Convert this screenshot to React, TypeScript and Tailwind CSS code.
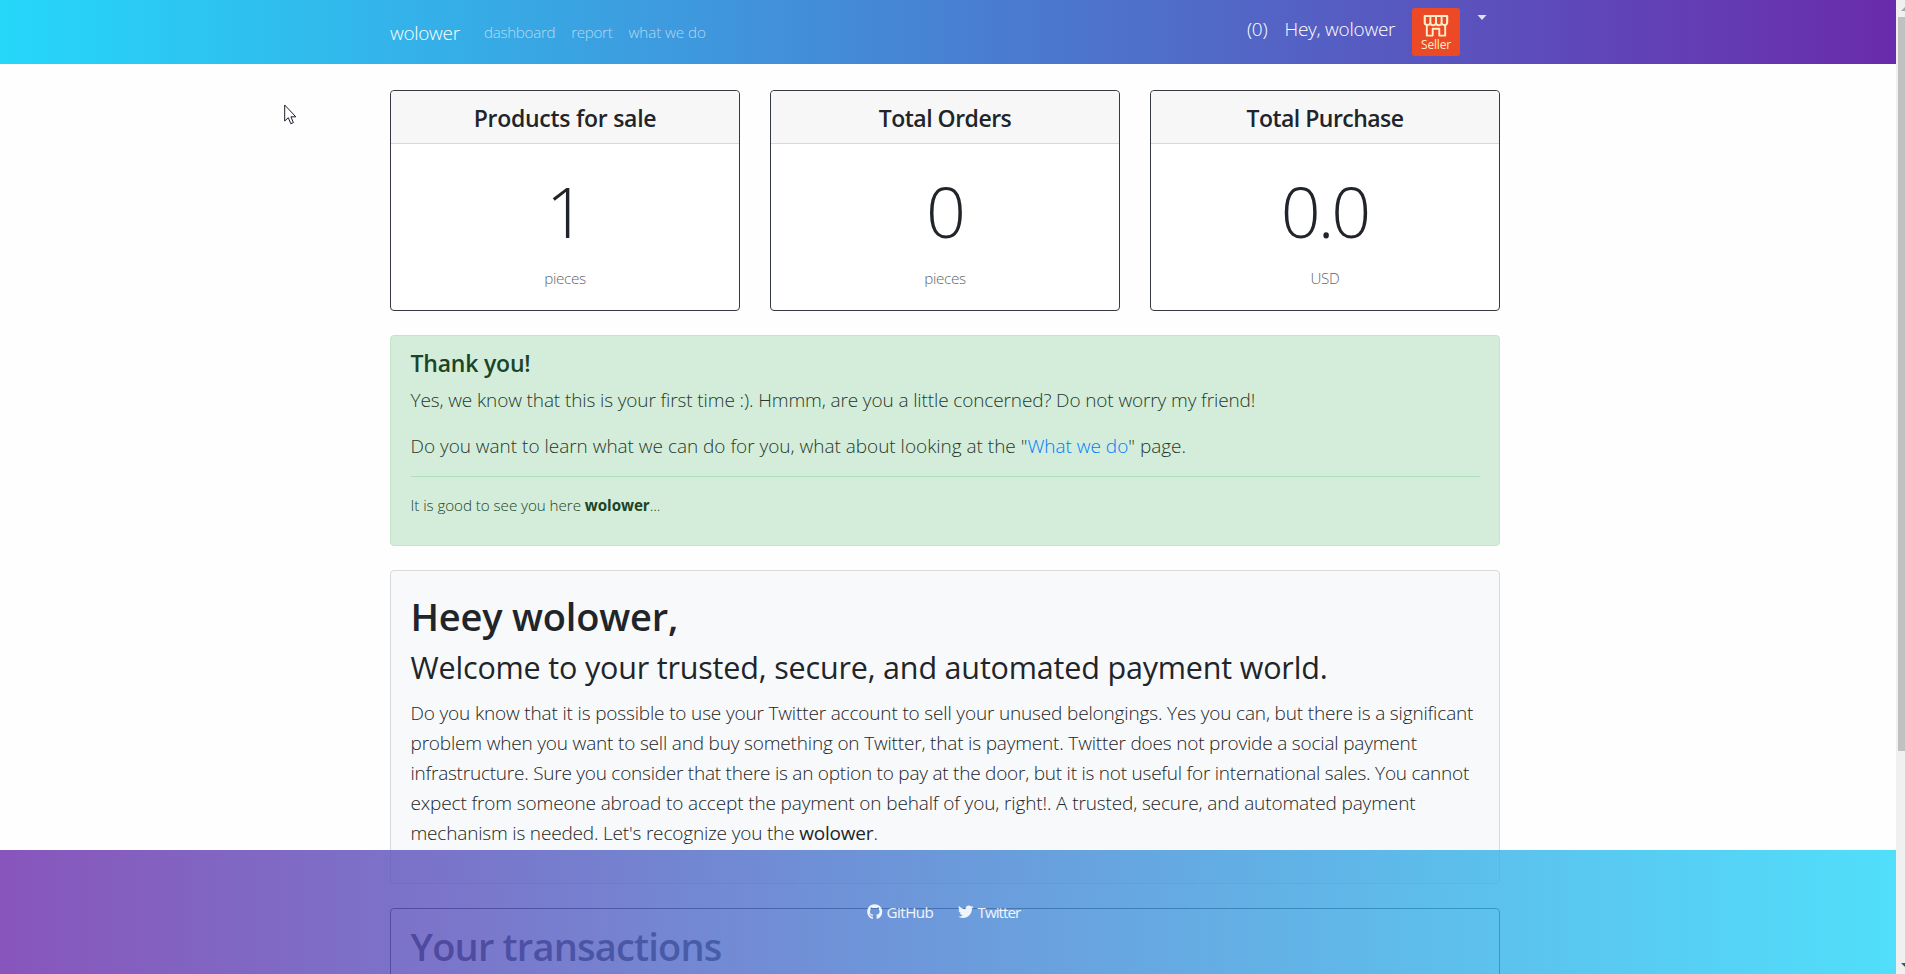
import { FaGithub, FaTwitter } from "react-icons/fa";

const stats = [
  { title: "Products for sale", value: "1", unit: "pieces", tracking: "tracking-[-0.27px]" },
  { title: "Total Orders", value: "0", unit: "pieces", tracking: "tracking-[-0.5px]" },
  { title: "Total Purchase", value: "0.0", unit: "USD", tracking: "tracking-[-0.52px]" },
];

const story = [
  { text: "Do you know that it is possible to use your Twitter account to sell your unused belongings. Yes you can, but there is a significant", tracking: "tracking-[-0.16px]" },
  { text: "problem when you want to sell and buy something on Twitter, that is payment. Twitter does not provide a social payment", tracking: "tracking-[-0.18px]" },
  { text: "infrastructure. Sure you consider that there is an option to pay at the door, but it is not useful for international sales. You cannot", tracking: "tracking-[-0.235px]" },
  { text: "expect from someone abroad to accept the payment on behalf of you, right!. A trusted, secure, and automated payment", tracking: "tracking-[-0.135px]" },
];

function SellerBadge() {
  return (
    <div className="flex h-12 w-12 flex-col items-center rounded-[3px] bg-[#ec4a26] pt-[6px] text-[#fdeecb]">
      <svg width="26" height="24" viewBox="0 0 26 24" fill="none" stroke="currentColor" strokeWidth="1.9" strokeLinejoin="round">
        <path d="M3 2h20v6.2a2.5 2.5 0 0 1-5 .6 2.5 2.5 0 0 1-5 0 2.5 2.5 0 0 1-5 0 2.5 2.5 0 0 1-5-.6z" transform="translate(-1.6 0) scale(1.12 1)" />
        <path d="M7.4 2v6.5M13 2v6.5M18.6 2v6.5M3.8 11v10.6h5.9v-6.8h6.6v6.8h5.9V11" />
      </svg>
      <span className="-mt-px text-[12px] font-medium leading-[15px] tracking-[-0.2px]">Seller</span>
    </div>
  );
}

function Navbar() {
  return (
    <header className="flex h-16 bg-linear-to-r/srgb from-[#25d7fa] to-[#6a2bab] pl-[390px] font-light text-white">
      <span className="w-[94px] pt-[18px] text-[19px] leading-[30px] tracking-[-0.3px]">wolower</span>
      <nav className="flex gap-4 pt-5 text-[15.2px] leading-6 tracking-[-0.32px] text-white/60">
        <a>dashboard</a>
        <a>report</a>
        <a className="tracking-[-0.1px]">what we do</a>
      </nav>
      <div className="ml-auto flex w-[649px] text-[19px] leading-[30px]">
        <span className="w-[37.5px] pt-[14px] tracking-[-0.3px]">(0)</span>
        <span className="w-[127.5px] pt-[14px] tracking-[-0.25px]">Hey, wolower</span>
        <div className="pt-2">
          <SellerBadge />
        </div>
        <svg className="mt-[15px] ml-[17px]" width="10" height="5" viewBox="0 0 10 5">
          <path d="M0.5 0h9L5 5z" fill="#e3dff2" />
        </svg>
      </div>
    </header>
  );
}

function Footer() {
  return (
    <footer className="absolute bottom-0 left-0 flex h-[124px] w-[1896px] items-start bg-linear-to-r/srgb from-[#6a2bab]/80 to-[#25d7fa]/80 pt-[50px] pl-[867px] text-[15.2px] leading-6 text-white/90">
      <a className="flex w-[91px] items-center">
        <FaGithub className="mr-1 size-[15.5px]" />
        <span className="tracking-[-0.55px]">GitHub</span>
      </a>
      <a className="flex items-center">
        <FaTwitter className="mr-1 size-[15.5px]" />
        <span className="tracking-[-0.95px]">Twitter</span>
      </a>
    </footer>
  );
}

function Scrollbar() {
  return (
    <div className="flex w-[9px] shrink-0 flex-col bg-[#f0f0f0] pl-[2px]">
      <svg className="mt-[6px] ml-[3px]" width="4" height="5" viewBox="0 0 4 5">
        <path d="M0 5L4 1v4z" fill="#a3a9b0" />
      </svg>
      <div className="mt-[6px] h-[734px] bg-[#c1c1c1]" />
      <svg className="mt-auto mb-[7px] ml-[3px]" width="4" height="4" viewBox="0 0 4 4">
        <path d="M0 0h4v4z" fill="#505050" />
      </svg>
    </div>
  );
}

export default function App() {
  return (
    <div className="relative flex h-[974px] w-[1905px] overflow-hidden bg-[#fefefe] font-['Open_Sans',sans-serif] text-[#212529]">
      <div className="h-[974px] w-[1896px] overflow-hidden">
        <Navbar />
        <main className="ml-[390px] w-[1110px] whitespace-nowrap pt-[26px]">
          <div className="grid grid-cols-3 gap-[30px]">
            {stats.map((s) => (
              <section key={s.title} className="h-[221px] rounded border border-[#343a40] bg-white text-center">
                <h4 className={`h-[53px] rounded-t border-b border-[#d8d8d8] bg-[#f7f7f7] pt-[13px] text-[23px] font-semibold leading-[29px] ${s.tracking}`}>
                  {s.title}
                </h4>
                <p className="mt-[24px] text-[70px] font-light leading-[86px] tracking-[-3px] indent-[-1px]">{s.value}</p>
                <p className="mt-[12px] text-[15.2px] font-light leading-6 tracking-[-0.3px] text-[#5d666e]">{s.unit}</p>
              </section>
            ))}
          </div>

          <section className="mt-6 h-[211px] rounded border border-[#c3e6cb] bg-[#d4edda] px-[19.5px] pt-[13px] text-[#155724]">
            <h4 className="text-[23px] font-semibold leading-[29px] tracking-[-0.2px] text-[#1c4427]">Thank you!</h4>
            <p className="mt-[7px] text-[19px] font-light leading-[30px] tracking-[-0.12px] text-[#26382b]">
              Yes, we know that this is your first time :). Hmmm, are you a little concerned? Do not worry my friend!
            </p>
            <p className="mt-4 text-[19px] font-light leading-[30px] tracking-[-0.02px] text-[#26382b]">
              Do you want to learn what we can do for you, what about looking at the "<a className="text-[#007bff]">What we do</a>" page.
            </p>
            <hr className="mt-[15px] border-[#b1dfbb]" />
            <p className="mt-4 text-[15.2px] font-light leading-6 tracking-[-0.06px] text-[#1c4427]">
              It is good to see you here <b className="font-bold">wolower</b>...
            </p>
          </section>

          <section className="mt-6 h-[314px] rounded border border-[#d8d9da] bg-[#f8f9fa] px-[19.5px] pt-[21px]">
            <h2 className="text-[38px] font-semibold leading-[48px] tracking-[-0.2px]">Heey wolower,</h2>
            <h3 className="mt-2 text-[30.5px] leading-[38px] tracking-[-0.18px]">
              Welcome to your trusted, secure, and automated payment world.
            </h3>
            <p className="mt-3 text-[19px] font-light leading-[30px]">
              {story.map((line) => (
                <span key={line.text} className={`block ${line.tracking}`}>{line.text}</span>
              ))}
              <span className="block tracking-[-0.18px]">
                mechanism is needed. Let's recognize you the <span className="font-normal">wolower</span>.
              </span>
            </p>
          </section>

          <section className="mt-6 h-[300px] rounded border border-[#343a40] bg-white px-[19.5px] pt-[13px]">
            <h2 className="text-[38px] font-semibold leading-[48px] tracking-[-0.8px]">Your transactions</h2>
          </section>
        </main>
      </div>
      <Scrollbar />
      <Footer />
      <svg className="absolute top-[104px] left-[284px]" width="13" height="21" viewBox="0 0 13 21">
        <path d="M0.7 1v16l3.6-3.3 2.5 6 2.6-1.1-2.5-5.8h4.9z" fill="#fff" stroke="#1d1d2b" strokeWidth="1" />
      </svg>
    </div>
  );
}
